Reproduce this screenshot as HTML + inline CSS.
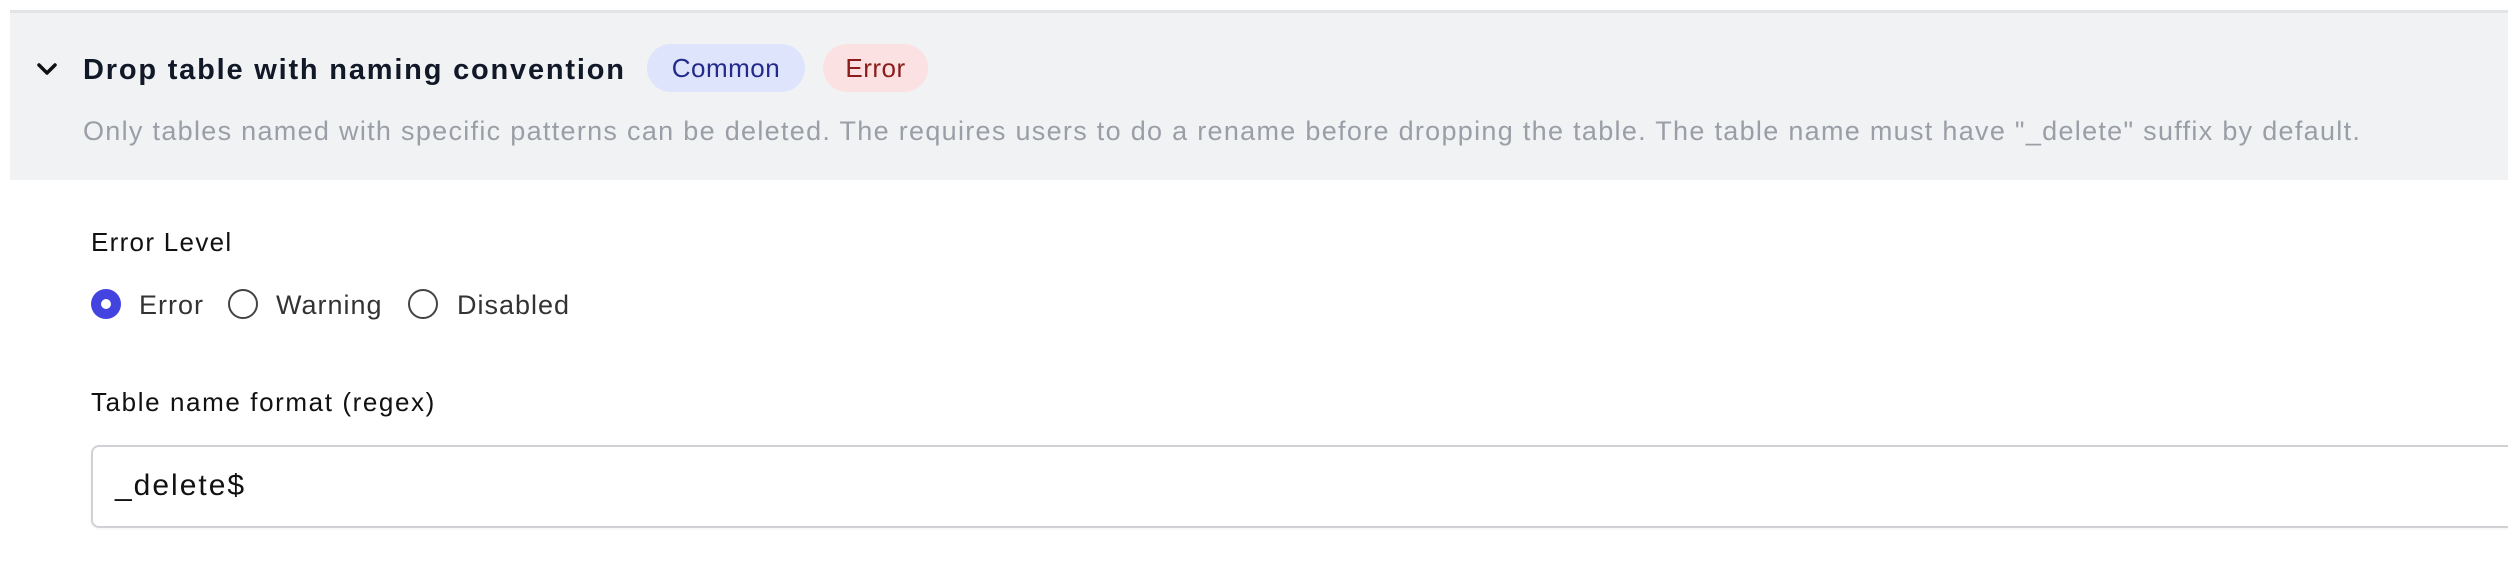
<!DOCTYPE html>
<html><head><meta charset="utf-8"><style>
html,body{margin:0;padding:0;background:#fff;width:2508px;height:576px;overflow:hidden;font-family:"Liberation Sans",sans-serif;}
.hdr{position:absolute;left:10px;top:10px;width:2498px;height:170px;background:#f1f2f4;border-top:3px solid #e3e4e6;box-sizing:border-box;}
.t{position:absolute;white-space:nowrap;}
</style></head><body>
<div class="hdr"></div>
<svg class="t" style="left:36px;top:61px" width="22" height="16" viewBox="0 0 22 16"><path d="M3 4 L11 12 L19 4" fill="none" stroke="#111" stroke-width="3.5" stroke-linecap="round" stroke-linejoin="round"/></svg>
<div class="t" style="left:83px;top:53px;font-size:29px;font-weight:bold;color:#111827;line-height:34px;letter-spacing:1.8px">Drop table with naming convention</div>
<div class="t" style="left:647px;top:44px;width:158px;height:48px;border-radius:24px;background:#dde4fb;color:#232a8c;font-size:26px;line-height:48px;text-align:center;letter-spacing:0.5px">Common</div>
<div class="t" style="left:823px;top:44px;width:105px;height:48px;border-radius:24px;background:#fbe1e1;color:#8a1c1c;font-size:26px;line-height:48px;text-align:center;letter-spacing:0.5px">Error</div>
<div class="t" style="left:83px;top:115px;font-size:27px;color:#9a9ea6;line-height:32px;letter-spacing:1.3px">Only tables named with specific patterns can be deleted. The requires users to do a rename before dropping the table. The table name must have "_delete" suffix by default.</div>
<div class="t" style="left:91px;top:227px;font-size:26px;color:#111;line-height:30px;letter-spacing:1.3px">Error Level</div>
<div class="t" style="left:91px;top:289px;width:30px;height:30px;border-radius:50%;background:#4343e0"></div>
<div class="t" style="left:101px;top:299px;width:10px;height:10px;border-radius:50%;background:#fff"></div>
<div class="t" style="left:139px;top:290px;font-size:27px;color:#333;line-height:30px;letter-spacing:1px">Error</div>
<div class="t" style="left:228px;top:289px;width:30px;height:30px;border-radius:50%;border:2px solid #444;box-sizing:border-box"></div>
<div class="t" style="left:276px;top:290px;font-size:27px;color:#333;line-height:30px;letter-spacing:1px">Warning</div>
<div class="t" style="left:408px;top:289px;width:30px;height:30px;border-radius:50%;border:2px solid #444;box-sizing:border-box"></div>
<div class="t" style="left:457px;top:290px;font-size:27px;color:#333;line-height:30px;letter-spacing:1px">Disabled</div>
<div class="t" style="left:91px;top:387px;font-size:26px;color:#111;line-height:30px;letter-spacing:1.6px">Table name format (regex)</div>
<div class="t" style="left:91px;top:445px;width:2440px;height:83px;border:2px solid #cfd1d4;border-radius:8px;box-sizing:border-box;box-shadow:0 1px 2px rgba(0,0,0,0.05)"></div>
<div class="t" style="left:115px;top:469px;font-size:30px;color:#111;line-height:34px;letter-spacing:2px">_delete$</div>
</body></html>
